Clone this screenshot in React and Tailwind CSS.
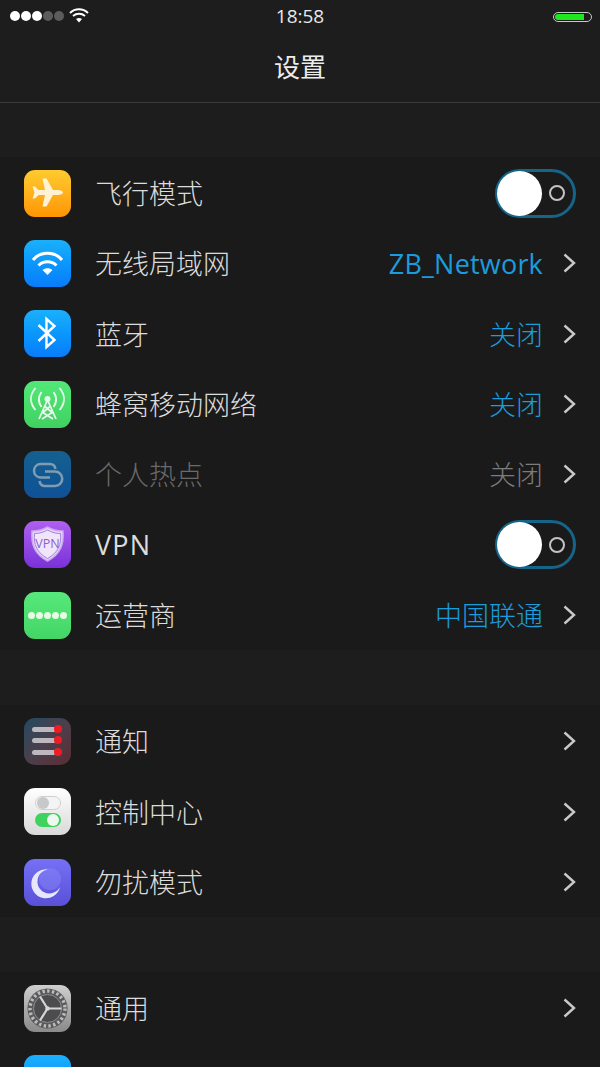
import React from "react";

const F = { fontFamily: '"Open Sans","Noto Sans CJK SC",sans-serif' };

function Chevron() {
  return (
    <svg width="14" height="22" viewBox="0 0 14 22" className="shrink-0" fill="none">
      <path d="M2.5 2.5 L12 11 L2.5 19.5" stroke="#c9c9c9" strokeWidth="2.4" />
    </svg>
  );
}

function Toggle() {
  return (
    <div className="relative w-[81px] h-[49px] rounded-full border-[3px] border-[#15648a] flex items-center justify-end pr-[8px]">
      <div className="absolute -left-px -top-px w-[45px] h-[45px] rounded-full bg-white" />
      <div className="w-[16px] h-[16px] rounded-full border-2 border-[#c4c4c4]" />
    </div>
  );
}

function Tile({ className, children }) {
  return (
    <div className={"w-[47px] h-[47px] rounded-[11px] shrink-0 flex items-center justify-center overflow-hidden " + className}>
      {children}
    </div>
  );
}

function Svg({ children, ...rest }) {
  return (
    <svg width="47" height="47" viewBox="0 0 47 47" {...rest}>
      {children}
    </svg>
  );
}

const Plane = () => (
  <Svg>
    <path
      d="M39 22.5 C38.4 20.4 35 20 33 20 L29 20 L22.5 8.5 L18.5 8.5 L21 20 L14.5 20 L11 16.5 L8.5 16.5 L10.5 22.5 L8.5 28.5 L11 28.5 L14.5 25 L21 25 L18.5 36.5 L22.5 36.5 L29 25 L33 25 C35 25 38.4 24.6 39 22.5Z"
      fill="#fff6dc"
      fillOpacity="0.95"
    />
  </Svg>
);
const Wifi = () => (
  <Svg fill="none" stroke="#fff">
    <path d="M9 20 C16 11 31 11 38 20" strokeWidth="3" />
    <path d="M14.5 25.5 C19.5 20.5 27.5 20.5 32.5 25.5" strokeWidth="3" />
    <path d="M18.5 30 C21.5 27.5 25.5 27.5 28.5 30 L23.5 35 Z" fill="#fff" stroke="none" />
  </Svg>
);
const Bluetooth = () => (
  <Svg fill="none" stroke="#fff" strokeWidth="2.4">
    <path d="M14.5 15 L30.5 30 L22.5 37 L22.5 9 L30.5 16 L14.5 31" />
  </Svg>
);
const Tower = () => (
  <Svg fill="none" stroke="#e8f8ea">
    <circle cx="23.5" cy="18" r="3" fill="#e8f8ea" stroke="none" />
    <path d="M23.5 19 L15 38 M23.5 19 L32 38 M18 31 L29 38 M29 31 L18 38 M20.5 25 L27.5 31 M26.5 25 L19.5 31" strokeWidth="1.8" />
    <path d="M17.5 11 C14 16 14 21 17.5 26 M29.5 11 C33 16 33 21 29.5 26" strokeWidth="1.9" />
    <path d="M11.5 7 C5.5 14 5.5 22 11.5 29 M35.5 7 C41.5 14 41.5 22 35.5 29" strokeWidth="1.9" />
  </Svg>
);
const Chain = () => (
  <Svg fill="none" stroke="#7f9cb3" strokeWidth="2.5">
    <path d="M26 26.5 L16 26.5 A6.8 6.8 0 0 1 16 13 L26 13 C29 13 31 15 31.5 18" />
    <path d="M21 20.5 L31 20.5 A7.2 7.2 0 0 1 31 35 L21 35 C18 35 16 33 15.5 30" />
  </Svg>
);
const Shield = () => (
  <Svg>
    <path d="M23.5 6 C28.5 9 34 10 39 10 C40 23 37 33 23.5 40 C10 33 7 23 8 10 C13 10 18.5 9 23.5 6Z" fill="#e6d6f8" stroke="#c9a9ee" strokeWidth="1.5" />
    <path d="M23.5 9 C28 11.5 32 12.5 36.5 12.5 C37.5 23 34.5 31.5 23.5 37.5 C12.5 31.5 9.5 23 10.5 12.5 C15 12.5 19 11.5 23.5 9Z" fill="#f0e6fb" stroke="#a77ee0" strokeWidth="1" />
    <text x="23.5" y="27" textAnchor="middle" fontSize="12.5" fontFamily="Open Sans" fill="#8b5fd0">VPN</text>
  </Svg>
);
const Dots = () => (
  <div className="flex gap-px">
    {[0, 1, 2, 3, 4].map((i) => (
      <div key={i} className="w-[7px] h-[7px] rounded-full bg-[#e4fbe4]" />
    ))}
  </div>
);
const Notif = () => (
  <div className="flex flex-col gap-[6.5px] w-[34px] ml-[3px] -mt-[1px]">
    {[0, 1, 2].map((i) => (
      <div key={i} className="relative h-[5px] w-[24px] rounded-full bg-[#bdb8bf]">
        <div className="absolute left-[22px] -top-[2px] w-[8px] h-[8px] rounded-full bg-[#f01c24]" />
      </div>
    ))}
  </div>
);
const Switches = () => (
  <div className="flex flex-col gap-[3px]">
    <div className="w-[26px] h-[14px] rounded-full border border-[#cfcfcf] bg-[#f4f4f4] relative">
      <div className="absolute left-[1px] top-0 w-[12px] h-[12px] rounded-full bg-[#c8c8c8]" />
    </div>
    <div className="w-[26px] h-[14px] rounded-full bg-[#3fd25f] relative">
      <div className="absolute right-[2px] top-px w-[12px] h-[12px] rounded-full bg-[#eef8ee]" />
    </div>
  </div>
);
const Moon = () => (
  <Svg>
    <circle cx="26" cy="20" r="11" fill="#8f8bf7" fillOpacity="0.4" />
    <path d="M24 10.5 A14.5 14.5 0 1 0 36 28 A12 12 0 1 1 24 10.5Z" fill="#e8e6fb" />
  </Svg>
);
const Gear = () => (
  <Svg>
    <circle cx="23.5" cy="23.5" r="20" fill="#5a5a5c" />
    <circle cx="23.5" cy="23.5" r="17.5" fill="none" stroke="#bcbcbc" strokeWidth="3.4" strokeDasharray="2.4 2.4" />
    <circle cx="23.5" cy="23.5" r="14" fill="#4c4c4e" stroke="#8f8f91" strokeWidth="1" />
    <path d="M23.5 23.5 L37.5 23.5 M23.5 23.5 L16 11.5 M23.5 23.5 L16 35.5" stroke="#d6d6d6" strokeWidth="2.2" />
    <circle cx="23.5" cy="23.5" r="2.2" fill="#d6d6d6" />
  </Svg>
);

function Row({ icon, label, value, toggle, dim, latin, latinLabel }) {
  return (
    <div className="h-[70.33px] flex items-center pl-[24px] pr-[24px]">
      {icon}
      <div
        className={
          "ml-[24px] flex-1 text-[27px] " +
          (latinLabel ? "font-normal tracking-[1.2px] pt-[1px] " : "font-light pt-[2px] ") +
          (dim ? "text-[#6a6a6a]" : "text-[#dcdcdc]")
        }
      >
        {label}
      </div>
      {toggle ? (
        <Toggle />
      ) : (
        <div className="flex items-center">
          {value && (
            <span
              className={
                "text-[27px] mr-[19px] pt-[2px] " +
                (dim ? "text-[#7c7c7c] " : "text-[#1a9cdd] ") +
                (latin ? "font-normal tracking-[0.2px]" : "font-light")
              }
            >
              {value}
            </span>
          )}
          <Chevron />
        </div>
      )}
    </div>
  );
}

export default function App() {
  return (
    <div style={F} className="w-[600px] h-[1067px] bg-[#1d1d1d] overflow-hidden flex flex-col text-white">
      <div className="h-[33px] relative flex items-center justify-center shrink-0">
        <div className="absolute left-[10px] top-[11px] flex gap-px">
          {[1, 1, 1, 0, 0].map((on, i) => (
            <div key={i} className={"w-[10px] h-[10px] rounded-full " + (on ? "bg-white" : "bg-[#5c5c5c]")} />
          ))}
        </div>
        <svg width="20" height="16" viewBox="0 0 20 16" className="absolute left-[69px] top-[7px]" fill="none" stroke="#fff" strokeWidth="2">
          <path d="M1 6 C6 1 14 1 19 6" />
          <path d="M4 9 C7.5 6 12.5 6 16 9" />
          <path d="M7 12 L10 15.5 L13 12 C11 10.5 9 10.5 7 12Z" fill="#fff" stroke="none" />
        </svg>
        <span className="text-[19px] font-normal text-[#e8e8e8]">18:58</span>
        <div className="absolute left-[553px] top-[12px] w-[39px] h-[10px] rounded-full border border-[#c8c8c8] p-[1px] flex">
          <div className="w-[29px] h-full rounded-l-full bg-[#1ee81e]" />
        </div>
      </div>
      <div className="h-[70px] flex items-center justify-center border-b border-[#3a3a3a] shrink-0">
        <span className="text-[26px] text-[#ececec] font-normal">设置</span>
      </div>
      <div className="h-[54px] shrink-0" />
      <div className="bg-[#1a1a1a] shrink-0 pt-px">
        <Row icon={<Tile className="bg-gradient-to-b from-[#fecb2e] to-[#fe9500]"><Plane /></Tile>} label="飞行模式" toggle />
        <Row icon={<Tile className="bg-gradient-to-b from-[#1bb0fc] to-[#0a7cfb]"><Wifi /></Tile>} label="无线局域网" value="ZB_Network" latin />
        <Row icon={<Tile className="bg-gradient-to-b from-[#1bb0fc] to-[#0a7cfb]"><Bluetooth /></Tile>} label="蓝牙" value="关闭" />
        <Row icon={<Tile className="bg-gradient-to-b from-[#52e878] to-[#3fd25f]"><Tower /></Tile>} label="蜂窝移动网络" value="关闭" />
        <Row icon={<Tile className="bg-gradient-to-b from-[#15608f] to-[#0f5196]"><Chain /></Tile>} label="个人热点" value="关闭" dim />
        <Row icon={<Tile className="bg-gradient-to-b from-[#b05ff0] to-[#7a30d8]"><Shield /></Tile>} label="VPN" toggle latinLabel />
        <Row icon={<Tile className="bg-gradient-to-b from-[#56e87a] to-[#44d665]"><Dots /></Tile>} label="运营商" value="中国联通" />
      </div>
      <div className="h-[55px] shrink-0" />
      <div className="bg-[#1a1a1a] shrink-0 pt-px">
        <Row icon={<Tile className="bg-gradient-to-br from-[#1f4a60] via-[#4a3f4c] to-[#5a2c34]"><Notif /></Tile>} label="通知" />
        <Row icon={<Tile className="bg-gradient-to-b from-[#ffffff] to-[#d9d9d9]"><Switches /></Tile>} label="控制中心" />
        <Row icon={<Tile className="bg-gradient-to-b from-[#7570f5] to-[#5a50d8]"><Moon /></Tile>} label="勿扰模式" />
      </div>
      <div className="h-[55px] shrink-0" />
      <div className="bg-[#1a1a1a] shrink-0 pt-px">
        <Row icon={<Tile className="bg-gradient-to-b from-[#cfcfcf] to-[#8a8a8a]"><Gear /></Tile>} label="通用" />
        <Row icon={<Tile className="bg-gradient-to-b from-[#1bb0fc] to-[#0a7cfb]" />} label="" />
      </div>
    </div>
  );
}
